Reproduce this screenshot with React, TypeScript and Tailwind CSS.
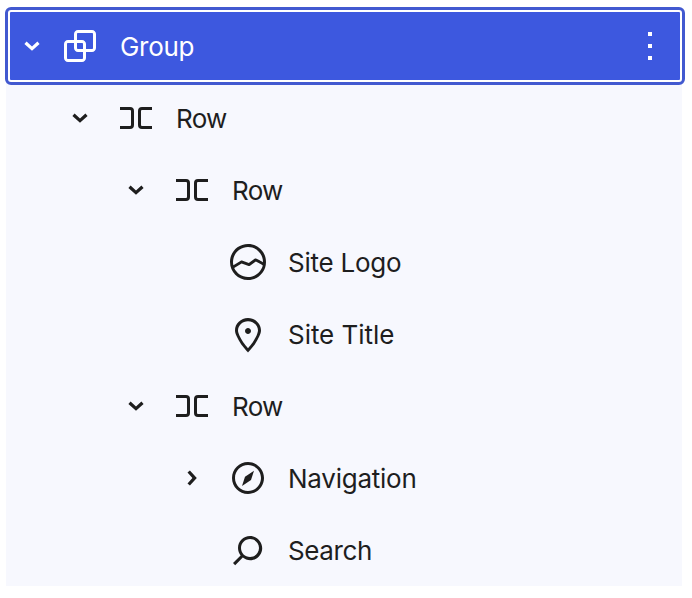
import React from 'react';
import { clsx } from 'clsx';

const ICONS = {
  chevron:
    'M10.95 8.2L14.4 12L10.95 15.8L9.75 14.7L12.2 12L9.75 9.3Z',
  more: 'M13 19h-2v-2h2v2zm0-6h-2v-2h2v2zm0-6h-2V5h2v2z',
  group:
    'M18 4h-7c-1.1 0-2 .9-2 2v3H6c-1.1 0-2 .9-2 2v7c0 1.1.9 2 2 2h7c1.1 0 2-.9 2-2v-3h3c1.1 0 2-.9 2-2V6c0-1.1-.9-2-2-2zm-4.5 14c0 .3-.2.5-.5.5H6c-.3 0-.5-.2-.5-.5v-7c0-.3.2-.5.5-.5h3V13c0 1.1.9 2 2 2h2.5v3zm0-4.5H11c-.3 0-.5-.2-.5-.5v-2.5H13c.3 0 .5.2.5.5v2.5zm5-.5c0 .3-.2.5-.5.5h-3V11c0-1.1-.9-2-2-2h-2.5V6c0-.3.2-.5.5-.5h7c.3 0 .5.2.5.5v7z',
  row: 'M4 6.5h5a2 2 0 0 1 2 2v7a2 2 0 0 1-2 2H4V16h5a.5.5 0 0 0 .5-.5v-7A.5.5 0 0 0 9 8H4V6.5Zm16 0h-5a2 2 0 0 0-2 2v7a2 2 0 0 0 2 2h5V16h-5a.5.5 0 0 1-.5-.5v-7A.5.5 0 0 1 15 8h5V6.5Z',
  logo: 'M12 3c-5 0-9 4-9 9s4 9 9 9 9-4 9-9-4-9-9-9zm0 1.5c4.1 0 7.5 3.4 7.5 7.5v.1c-1.4-.8-3.3-1.7-3.4-1.8-.2-.1-.5-.1-.8.1l-2.9 2.1L9 11.3c-.2-.1-.4 0-.6.1l-3.7 2.2c-.1-.5-.2-1-.2-1.5 0-4.2 3.4-7.6 7.5-7.6zm0 15c-3.1 0-5.7-1.9-6.9-4.5l3.7-2.2 3.5 1.2c.2.1.5 0 .7-.1l2.9-2.1c.8.4 2.5 1.2 3.5 1.9-.9 3.3-3.9 5.8-7.4 5.8z',
  marker:
    'M12 9c-.8 0-1.5.7-1.5 1.5S11.2 12 12 12s1.5-.7 1.5-1.5S12.8 9 12 9zm0-5c-3.6 0-6.5 2.8-6.5 6.2 0 .8.3 1.8.9 3.1.5 1.1 1.2 2.3 2 3.6.7 1 3 3.8 3.2 3.9l.4.5.4-.5c.2-.2 2.6-2.9 3.2-3.9.8-1.2 1.5-2.5 2-3.6.6-1.3.9-2.3.9-3.1C18.5 6.8 15.6 4 12 4zm4.3 8.7c-.5 1-1.1 2.2-1.9 3.4-.5.7-1.7 2.2-2.4 3-.7-.8-1.9-2.3-2.4-3-.8-1.2-1.4-2.3-1.9-3.3-.6-1.4-.7-2.2-.7-2.5 0-2.6 2.2-4.7 5-4.7s5 2.1 5 4.7c0 .2-.1 1-.7 2.4z',
  compass:
    'M12 4c-4.4 0-8 3.6-8 8s3.6 8 8 8 8-3.6 8-8-3.6-8-8-8zm0 14.5c-3.6 0-6.5-2.9-6.5-6.5S8.4 5.5 12 5.5s6.5 2.9 6.5 6.5-2.9 6.5-6.5 6.5zM9 16l4.5-3L15 8.4l-4.5 3L9 16z',
  search:
    'M13 5c-3.3 0-6 2.7-6 6 0 1.4.5 2.7 1.3 3.7l-3.8 3.8 1.1 1.1 3.8-3.8c1 .8 2.3 1.3 3.7 1.3 3.3 0 6-2.7 6-6S16.3 5 13 5zm0 10.5c-2.5 0-4.5-2-4.5-4.5s2-4.5 4.5-4.5 4.5 2 4.5 4.5-2 4.5-4.5 4.5z',
};

type IconName = keyof typeof ICONS;

function Icon({ name, className }: { name: IconName; className?: string }) {
  return (
    <svg viewBox="0 0 24 24" fill="currentColor" className={clsx('size-12 shrink-0', className)} aria-hidden="true">
      <path d={ICONS[name]} />
    </svg>
  );
}

type Block = {
  label: string;
  icon: IconName;
  level: 1 | 2 | 3;
  state?: 'open' | 'closed';
  tracking: string;
};

const BLOCKS: Block[] = [
  { label: 'Row', icon: 'row', level: 1, state: 'open', tracking: 'tracking-[-0.7px]' },
  { label: 'Row', icon: 'row', level: 2, state: 'open', tracking: 'tracking-[-0.7px]' },
  { label: 'Site Logo', icon: 'logo', level: 3, tracking: 'tracking-[-0.25px]' },
  { label: 'Site Title', icon: 'marker', level: 3, tracking: 'tracking-[-0.05px]' },
  { label: 'Row', icon: 'row', level: 2, state: 'open', tracking: 'tracking-[-0.7px]' },
  { label: 'Navigation', icon: 'compass', level: 3, state: 'closed', tracking: 'tracking-[-0.25px]' },
  { label: 'Search', icon: 'search', level: 3, tracking: 'tracking-[-0.4px]' },
];

const INDENT = { 1: 'pl-[50px]', 2: 'pl-[106px]', 3: 'pl-[162px]' };

function BlockRow({ label, icon, level, state, tracking }: Block) {
  return (
    <li className={clsx('flex h-[72px] items-center', INDENT[level])}>
      {state ? <Icon name="chevron" className={state === 'open' ? 'rotate-90' : ''} /> : <span className="size-12" />}
      <Icon name={icon} className="ml-2" />
      <span className={clsx('ml-4 pt-0.5', tracking)}>{label}</span>
    </li>
  );
}

export default function App() {
  return (
    <div className="h-[598px] w-[692px] bg-white pt-2.5 pl-1.5 font-['Inter',sans-serif] text-[26px] leading-8 text-[#1e1e1e]">
      <ul className="w-[676px] bg-[#f7f8fe]">
        <li className="ml-0.5 flex h-[72px] items-center rounded-[3px] border-2 border-white bg-[#3d58df] pr-1.5 text-white outline-3 outline-[#4259d0]">
          <Icon name="chevron" className="-ml-0.5 rotate-90" />
          <Icon name="group" />
          <span className="ml-4 grow pt-0.5 tracking-[-0.3px]">Group</span>
          <Icon name="more" />
        </li>
        {BLOCKS.map((block, i) => (
          <BlockRow key={i} {...block} />
        ))}
      </ul>
    </div>
  );
}
